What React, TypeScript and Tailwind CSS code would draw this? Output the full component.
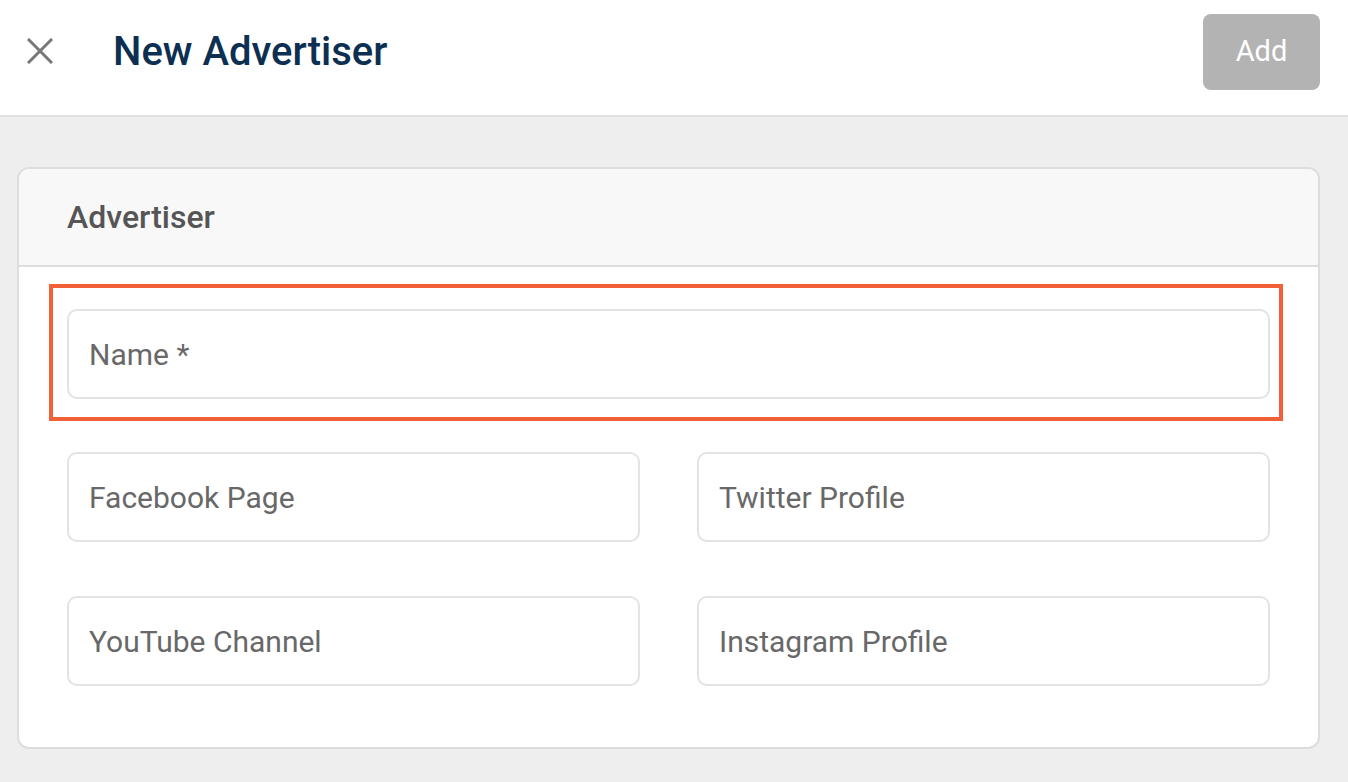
import React from "react";

function Field({ label }: { label: string }) {
  return (
    <div className="h-[90px] flex items-center rounded-[10px] border-2 border-[#e3e3e3] bg-white pl-[20px] text-[30px] text-[#686868]" style={{ fontFamily: "Roboto, 'Liberation Sans', sans-serif" }}>
      {label}
    </div>
  );
}

export default function App() {
  return (
    <div className="w-[1348px] h-[782px] overflow-hidden bg-[#eeeeee]" style={{ fontFamily: "Roboto, 'Liberation Sans', sans-serif" }}>
      <header className="h-[117px] bg-white border-b-2 border-[#e2e2e2] flex items-center pl-[27px] pr-[28px] pb-[11px]">
        <svg width="26" height="26" viewBox="0 0 26 26" className="mb-[2px]">
          <path d="M1 1 L25 25 M25 1 L1 25" stroke="#777777" strokeWidth="3" strokeLinecap="butt" />
        </svg>
        <h1 className="ml-[60px] text-[40px] font-medium text-[#0c2f52] leading-none">New Advertiser</h1>
        <button className="ml-auto w-[117px] h-[76px] rounded-[8px] bg-[#b3b3b3] text-white text-[29px]">Add</button>
      </header>
      <main className="pt-[50px] pl-[17px] pr-[28px]">
        <div className="rounded-[12px] border-2 border-[#dddddd] bg-white overflow-hidden">
          <div className="h-[98px] bg-[#f8f8f8] border-b-2 border-[#dddddd] flex items-center pl-[48px]">
            <span className="text-[32px] font-medium text-[#555555]">Advertiser</span>
          </div>
          <div className="px-[48px] pt-[42px] pb-[61px] flex flex-col gap-[53px]">
            <div className="relative">
              <Field label="Name *" />
              <div className="absolute left-[-18px] top-[-25px] right-[-13px] bottom-[-22px] border-4 border-[#f16036] pointer-events-none" />
            </div>
            <div className="grid grid-cols-2 gap-x-[57px] gap-y-[54px]">
              <Field label="Facebook Page" />
              <Field label="Twitter Profile" />
              <Field label="YouTube Channel" />
              <Field label="Instagram Profile" />
            </div>
          </div>
        </div>
      </main>
    </div>
  );
}
